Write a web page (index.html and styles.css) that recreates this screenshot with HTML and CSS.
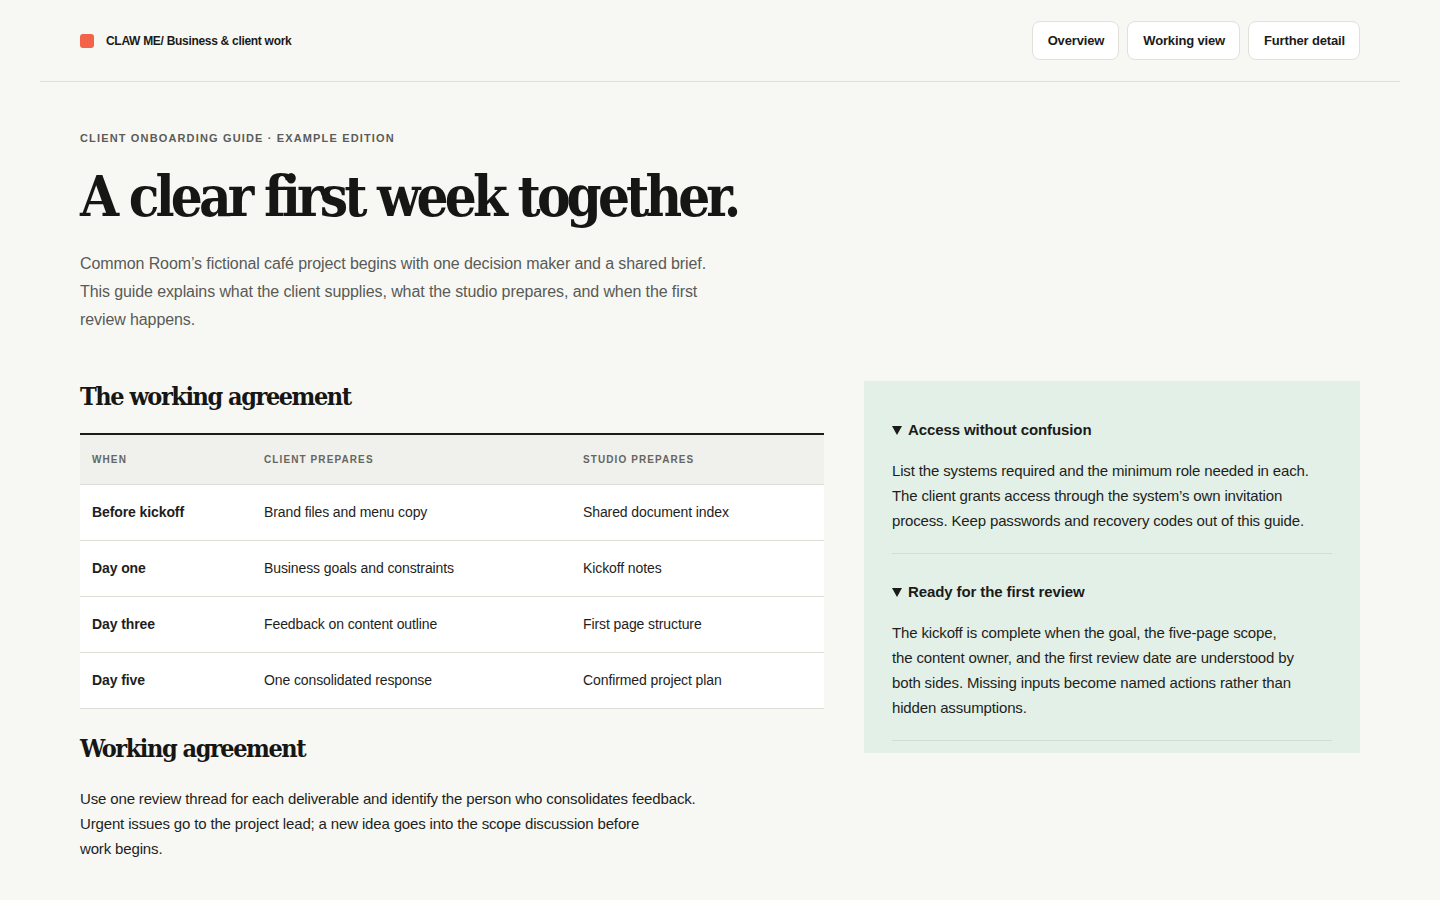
FILE: index.html
```html
<!DOCTYPE html>
<html lang="en">
<head>
<meta charset="utf-8">
<title>Client onboarding guide</title>
<link rel="stylesheet" href="styles.css">
</head>
<body>
<header class="topbar">
  <div class="brand"><span class="brand-mark"></span><span class="brand-text">CLAW ME/ Business &amp; client work</span></div>
  <nav class="nav">
    <a class="nav-btn" href="#">Overview</a>
    <a class="nav-btn" href="#">Working view</a>
    <a class="nav-btn" href="#">Further detail</a>
  </nav>
</header>
<main class="page">
  <section class="intro">
    <p class="eyebrow">CLIENT ONBOARDING GUIDE · EXAMPLE EDITION</p>
    <h1 class="title">A clear first week together.</h1>
    <p class="lede">Common Room’s fictional café project begins with one decision maker and a shared brief. This guide explains what the client supplies, what the studio prepares, and when the first review happens.</p>
  </section>
  <div class="columns">
    <div class="main-col">
      <h2 class="section-title">The working agreement</h2>
      <table class="agreement">
        <thead>
          <tr><th class="c1">WHEN</th><th class="c2">CLIENT PREPARES</th><th class="c3">STUDIO PREPARES</th></tr>
        </thead>
        <tbody>
          <tr><td class="when">Before kickoff</td><td>Brand files and menu copy</td><td>Shared document index</td></tr>
          <tr><td class="when">Day one</td><td>Business goals and constraints</td><td>Kickoff notes</td></tr>
          <tr><td class="when">Day three</td><td>Feedback on content outline</td><td>First page structure</td></tr>
          <tr><td class="when">Day five</td><td>One consolidated response</td><td>Confirmed project plan</td></tr>
        </tbody>
      </table>
      <h2 class="section-title second">Working agreement</h2>
      <p class="body-text">Use one review thread for each deliverable and identify the person who consolidates feedback.<br>Urgent issues go to the project lead; a new idea goes into the scope discussion before<br>work begins.</p>
    </div>
    <aside class="side">
      <details class="item" open>
        <summary>Access without confusion</summary>
        <p>List the systems required and the minimum role needed in each.<br>The client grants access through the system’s own invitation<br>process. Keep passwords and recovery codes out of this guide.</p>
      </details>
      <details class="item" open>
        <summary>Ready for the first review</summary>
        <p>The kickoff is complete when the goal, the five-page scope,<br>the content owner, and the first review date are understood by<br>both sides. Missing inputs become named actions rather than<br>hidden assumptions.</p>
      </details>
    </aside>
  </div>
</main>
</body>
</html>
```
FILE: styles.css
```css
* { box-sizing: border-box; }
html, body { margin: 0; padding: 0; }
body {
  background: #f7f8f4;
  color: #1b1b19;
  font-family: "Liberation Sans", Arial, sans-serif;
}
.topbar {
  margin: 0 40px;
  padding: 21px 40px 21px;
  border-bottom: 1px solid #dedfd8;
  display: flex;
  align-items: center;
  justify-content: space-between;
}
.brand { display: flex; align-items: center; gap: 12px; }
.brand-mark {
  width: 14px; height: 14px; border-radius: 3px; background: #f2634a;
}
.brand-text { font-size: 12px; font-weight: 700; letter-spacing: -0.3px; color: #1b1b19; }
.nav { display: flex; gap: 8px; }
.nav-btn {
  display: inline-flex; align-items: center;
  height: 39px; padding: 0 14px 0 15px;
  background: #fff; border: 1px solid #e0e1da; border-radius: 8px;
  color: #1b1b19; text-decoration: none;
  font-size: 13px; font-weight: 700; letter-spacing: -0.15px;
}
.page { padding: 0 80px 40px; }
.intro { padding-top: 50px; }
.eyebrow {
  margin: 0; font-size: 11px; font-weight: 700; letter-spacing: 1.15px; color: #5c5c58;
}
.title {
  margin: 20px 0 0;
  font-family: "DejaVu Serif", serif;
  font-stretch: condensed;
  font-variant-ligatures: none;
  font-weight: 700;
  font-size: 56px;
  line-height: 64px;
  letter-spacing: -3.9px;
  word-spacing: 0;
  color: #161614;
}
.lede {
  margin: 22px 0 0; max-width: 640px;
  font-size: 16px; line-height: 28px; color: #5a5a56; letter-spacing: -0.1px;
}
.columns {
  margin-top: 47px;
  display: grid;
  grid-template-columns: 3fr 2fr;
  gap: 40px;
  align-items: start;
}
.section-title {
  margin: 0;
  font-family: "DejaVu Serif", serif;
  font-stretch: condensed;
  font-variant-ligatures: none;
  font-weight: 700;
  font-size: 25px;
  line-height: 32px;
  letter-spacing: -1.45px;
  color: #161614;
}
.agreement {
  margin-top: 20px;
  width: 100%;
  border-collapse: collapse;
  border-top: 2px solid #1b1b19;
  font-size: 14px;
}
.agreement th {
  background: #f0f1ec;
  height: 50px;
  padding: 0 12px;
  text-align: left;
  font-size: 10px; font-weight: 700; letter-spacing: 1.1px; color: #66665f;
  border-bottom: 1px solid #deded7;
}
.agreement .c1 { width: 172px; }
.agreement .c2 { width: 319px; }
.agreement td {
  background: #fff;
  height: 56px;
  padding: 0 12px;
  border-bottom: 1px solid #deded7;
  color: #1e1e1c;
  letter-spacing: -0.1px;
}
.agreement td.when { font-weight: 700; }
.section-title.second { margin-top: 24px; }
.body-text {
  margin: 21px 0 0;
  font-size: 15px; line-height: 25px; color: #1e1e1c; letter-spacing: -0.15px;
}
.side {
  margin-top: 0;
  background: #e3f0e7;
  padding: 38px 28px 12px;
}
.item { border-bottom: 1px solid #d3ddd5; padding-bottom: 20px; margin-bottom: 27px; }
.item:last-child { margin-bottom: 0; }
.item summary {
  list-style: none;
  cursor: pointer;
  font-size: 15px; font-weight: 700; color: #1b1b19; letter-spacing: -0.1px;
  line-height: 22px;
  display: flex; align-items: center; gap: 6px;
}
.item summary::-webkit-details-marker { display: none; }
.item summary::before {
  content: "";
  width: 0; height: 0;
  border-left: 5px solid transparent;
  border-right: 5px solid transparent;
  border-top: 9px solid #1b1b19;
}
.item p {
  margin: 17px 0 0;
  font-size: 15px; line-height: 25px; color: #1e1e1c; letter-spacing: -0.15px;
}
```
